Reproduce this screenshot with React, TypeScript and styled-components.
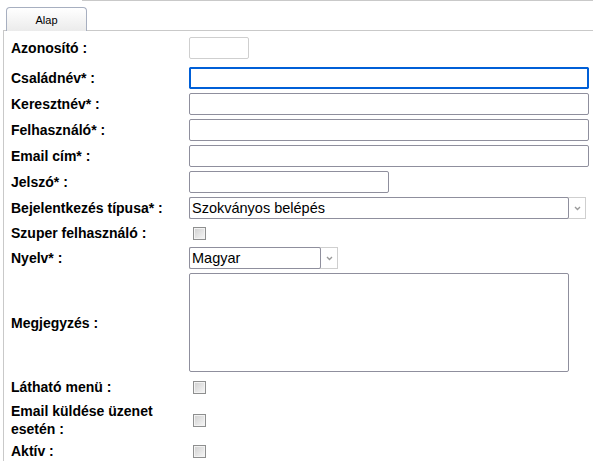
import React from 'react'
import styled, { createGlobalStyle } from 'styled-components'

const Global = createGlobalStyle`
  html, body {
    margin: 0;
    padding: 0;
    background: #fff;
    font-family: "Liberation Sans", Arial, sans-serif;
  }
`

const Page = styled.div`
  width: 593px;
  height: 461px;
  overflow: hidden;
  background: #fff;
`

const TabStrip = styled.div`
  display: flex;
  align-items: flex-end;
  height: 30px;
  padding-left: 6px;
`

const Tab = styled.div`
  width: 79px;
  height: 23px;
  border: 1px solid #a7afc0;
  border-bottom: none;
  border-radius: 4px 4px 0 0;
  background: linear-gradient(#ffffff, #ebebeb);
  font-size: 11px;
  color: #000;
  display: flex;
  align-items: center;
  justify-content: center;
  position: relative;
  z-index: 1;
  margin-bottom: -1px;
`

const StripLine = styled.div`
  flex: 1;
  align-self: flex-start;
  border-top: 1px solid #c9c9c9;
  margin-left: -5px;
`

const Panel = styled.div`
  border-top: 1px solid #c9c9c9;
  border-left: 1px solid #c9c9c9;
  margin-left: 3px;
  padding: 6px 0 20px 7px;
`

const Form = styled.div`
  display: grid;
  grid-template-columns: 178px 1fr;
  row-gap: 4px;
`

const Label = styled.div<{ $h?: number; $gapAfter?: number }>`
  min-height: ${(p) => p.$h ?? 22}px;
  margin-bottom: ${(p) => p.$gapAfter ?? 0}px;
  display: flex;
  align-items: center;
  font-size: 14px;
  font-weight: bold;
  line-height: 18px;
  color: #000;
`

const Cell = styled.div<{ $gapAfter?: number }>`
  display: flex;
  align-items: center;
  margin-bottom: ${(p) => p.$gapAfter ?? 0}px;
`

const TextInput = styled.div<{ $w: number; $focused?: boolean; $light?: boolean }>`
  box-sizing: border-box;
  width: ${(p) => p.$w}px;
  height: 22px;
  border-radius: 2px;
  border: 1px solid ${(p) => (p.$light ? '#cfcfcf' : '#8f8f9d')};
  background: #fff;
  ${(p) =>
    p.$focused &&
    `
    border: 2px solid #005fd7;
    outline: 1px solid #005fd7;
    outline-offset: -1px;
  `}
`

const SelectBox = styled.div<{ $w: number }>`
  box-sizing: border-box;
  width: ${(p) => p.$w}px;
  height: 22px;
  display: flex;
  border: 1px solid #cfcfcf;
  background: #fff;
`

const SelectValue = styled.div`
  flex: 1;
  margin: -1px 0 -1px -1px;
  border: 1px solid #8f8f9d;
  border-radius: 2px;
  font-size: 14.5px;
  line-height: 20px;
  padding-left: 2px;
  color: #000;
  white-space: nowrap;
  overflow: hidden;
`

const SelectArrow = styled.div`
  width: 16px;
  display: flex;
  align-items: center;
  justify-content: center;
`

const TextArea = styled.div`
  box-sizing: border-box;
  width: 380px;
  height: 99px;
  border: 1px solid #8f8f9d;
  border-radius: 2px;
  background: #fff;
`

const Check = styled.span`
  box-sizing: border-box;
  display: inline-block;
  width: 13px;
  height: 13px;
  margin-left: 4px;
  border: 1px solid #8e8f8f;
  box-shadow: inset 0 0 0 1px #f3f3f3;
  background: linear-gradient(135deg, #cfcfcf, #f7f7f7);
`

// small grey chevron inside the dropdown's button area
const Chevron = () => (
  <svg width="7" height="5" viewBox="0 0 7 5">
    <path d="M1 1 L3.5 3.5 L6 1" stroke="#9a9a9a" strokeWidth="1.4" fill="none" />
  </svg>
)

const Select = ({ w, value }: { w: number; value: string }) => (
  <SelectBox $w={w}>
    <SelectValue>{value}</SelectValue>
    <SelectArrow>
      <Chevron />
    </SelectArrow>
  </SelectBox>
)

const App = () => (
  <Page>
    <Global />
    <TabStrip>
      <Tab>Alap</Tab>
      <StripLine />
    </TabStrip>
    <Panel>
      <Form>
        <Label $gapAfter={4}>Azonosító :</Label>
        <Cell $gapAfter={4}>
          <TextInput $w={60} $light />
        </Cell>

        <Label>Családnév* :</Label>
        <Cell>
          <TextInput $w={400} $focused />
        </Cell>

        <Label>Keresztnév* :</Label>
        <Cell>
          <TextInput $w={400} />
        </Cell>

        <Label>Felhasználó* :</Label>
        <Cell>
          <TextInput $w={400} />
        </Cell>

        <Label>Email cím* :</Label>
        <Cell>
          <TextInput $w={400} />
        </Cell>

        <Label>Jelszó* :</Label>
        <Cell>
          <TextInput $w={200} />
        </Cell>

        <Label>Bejelentkezés típusa* :</Label>
        <Cell>
          <Select w={397} value="Szokványos belépés" />
        </Cell>

        <Label $h={20}>Szuper felhasználó :</Label>
        <Cell>
          <Check />
        </Cell>

        <Label>Nyelv* :</Label>
        <Cell>
          <Select w={149} value="Magyar" />
        </Cell>

        <Label $h={99}>Megjegyzés :</Label>
        <Cell>
          <TextArea />
        </Cell>

        <Label $h={22}>Látható menü :</Label>
        <Cell>
          <Check />
        </Cell>

        <Label $h={36}>Email küldése üzenet esetén :</Label>
        <Cell>
          <Check />
        </Cell>

        <Label $h={18}>Aktív :</Label>
        <Cell>
          <Check />
        </Cell>
      </Form>
    </Panel>
  </Page>
)

export default App
